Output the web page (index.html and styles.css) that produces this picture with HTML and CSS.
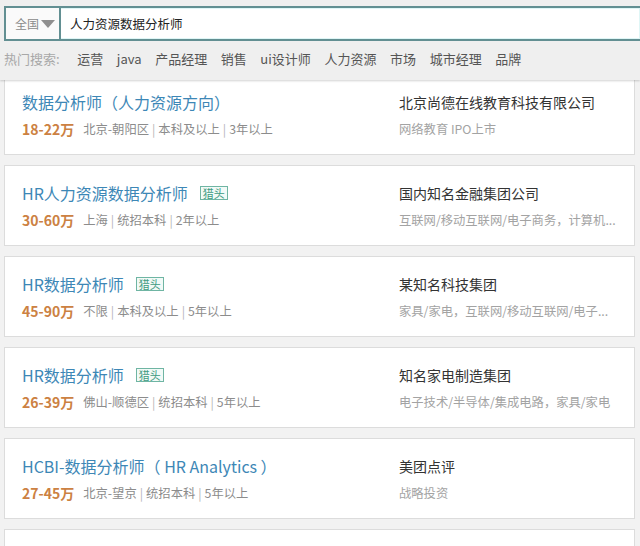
FILE: index.html
```html
<!DOCTYPE html>
<html lang="zh-CN">
<head>
<meta charset="utf-8">
<title>搜索结果</title>
<link rel="stylesheet" href="styles.css">
</head>
<body>
<div class="page">
  <header class="header">
    <div class="search">
      <div class="city">全国<span class="caret"></span></div>
      <div class="query">人力资源数据分析师</div>
    </div>
    <div class="hot">
      <span class="hot-label">热门搜索:</span>
      <span class="hot-item">运营</span>
      <span class="hot-item">java</span>
      <span class="hot-item">产品经理</span>
      <span class="hot-item">销售</span>
      <span class="hot-item">ui设计师</span>
      <span class="hot-item">人力资源</span>
      <span class="hot-item">市场</span>
      <span class="hot-item">城市经理</span>
      <span class="hot-item">品牌</span>
    </div>
  </header>
  <main class="list">
    <div class="card first">
      <div class="left">
        <div class="title">数据分析师（人力资源方向）</div>
        <div class="meta"><span class="salary">18-22万</span><span class="info">北京-朝阳区<i>|</i>本科及以上<i>|</i>3年以上</span></div>
      </div>
      <div class="right">
        <div class="company">北京尚德在线教育科技有限公司</div>
        <div class="industry">网络教育 IPO上市</div>
      </div>
    </div>
    <div class="card">
      <div class="left">
        <div class="title">HR人力资源数据分析师<span class="tag">猎头</span></div>
        <div class="meta"><span class="salary">30-60万</span><span class="info">上海<i>|</i>统招本科<i>|</i>2年以上</span></div>
      </div>
      <div class="right">
        <div class="company">国内知名金融集团公司</div>
        <div class="industry">互联网/移动互联网/电子商务，计算机...</div>
      </div>
    </div>
    <div class="card">
      <div class="left">
        <div class="title">HR数据分析师<span class="tag">猎头</span></div>
        <div class="meta"><span class="salary">45-90万</span><span class="info">不限<i>|</i>本科及以上<i>|</i>5年以上</span></div>
      </div>
      <div class="right">
        <div class="company">某知名科技集团</div>
        <div class="industry">家具/家电，互联网/移动互联网/电子...</div>
      </div>
    </div>
    <div class="card">
      <div class="left">
        <div class="title">HR数据分析师<span class="tag">猎头</span></div>
        <div class="meta"><span class="salary">26-39万</span><span class="info">佛山-顺德区<i>|</i>统招本科<i>|</i>5年以上</span></div>
      </div>
      <div class="right">
        <div class="company">知名家电制造集团</div>
        <div class="industry">电子技术/半导体/集成电路，家具/家电</div>
      </div>
    </div>
    <div class="card">
      <div class="left">
        <div class="title">HCBI-数据分析师（ HR Analytics ）</div>
        <div class="meta"><span class="salary">27-45万</span><span class="info">北京-望京<i>|</i>统招本科<i>|</i>5年以上</span></div>
      </div>
      <div class="right">
        <div class="company">美团点评</div>
        <div class="industry">战略投资</div>
      </div>
    </div>
    <div class="card">
      <div class="left">
        <div class="title">&nbsp;</div>
      </div>
    </div>
  </main>
</div>
</body>
</html>
```

FILE: styles.css
```css
* { box-sizing: border-box; }
html, body { margin: 0; padding: 0; }
body {
  width: 640px;
  height: 546px;
  overflow: hidden;
  background: #f2f2f2;
  font-family: "Noto Sans CJK SC", "Noto Sans", sans-serif;
  color: #333;
}
.page { display: flex; flex-direction: column; height: 546px; }

.header {
  position: relative;
  z-index: 2;
  background: #efefef;
  height: 80px;
  padding: 6px 0 0 4px;
  box-shadow: 0 1px 2px rgba(0,0,0,0.18);
}
.search {
  display: flex;
  height: 35px;
  border: 2px solid #628f92;
  border-right: none;
  background: #fff;
  box-shadow: inset 0 0 0 1px #dff6f6;
}
.city {
  width: 55px;
  display: flex;
  align-items: center;
  padding-left: 9px;
  font-size: 12px;
  color: #8a8a8a;
  border-right: 2px solid #628f92;
  background: #fafafa;
}
.caret {
  display: inline-block;
  margin-left: 2px;
  width: 0; height: 0;
  border-left: 7px solid transparent;
  border-right: 7px solid transparent;
  border-top: 8px solid #8f8f8f;
}
.query {
  display: flex;
  align-items: center;
  padding-left: 9px;
  font-size: 12.5px;
  color: #222;
}
.hot {
  display: flex;
  align-items: center;
  height: 34px;
  gap: 13.6px;
  font-size: 13px;
  color: #555;
}
.hot-label { color: #a8a8a8; margin-right: 4px; }

.list {
  flex: 1;
  overflow: hidden;
  padding: 0 5px 0 4px;
  display: flex;
  flex-direction: column;
  gap: 10px;
}
.card {
  flex: none;
  display: grid;
  grid-template-columns: 377px 1fr;
  height: 81px;
  background: #fff;
  border: 1px solid #dcdcdc;
  padding: 17px 0 0 17px;
}
.card.first { margin-top: -6px; }
.left, .right { display: flex; flex-direction: column; gap: 8px; min-width: 0; }
.title {
  font-size: 16px;
  line-height: 20px;
  color: #3d87b6;
  display: flex;
  align-items: center;
  white-space: nowrap;
}
.tag {
  margin-left: 12px;
  font-size: 11px;
  line-height: 12px;
  padding: 0 2px;
  color: #3f9a82;
  border: 1px solid #6fb5a3;
  background: #f2faf7;
}
.meta {
  display: flex;
  align-items: center;
  height: 18px;
  white-space: nowrap;
}
.salary {
  font-size: 14px;
  font-weight: bold;
  color: #cc8142;
  margin-right: 9px;
}
.info { font-size: 12.3px; color: #8c8c8c; }
.info i { font-style: normal; color: #b5b5b5; margin: 0 3px; }
.company {
  font-size: 14px;
  line-height: 20px;
  color: #333;
  white-space: nowrap;
}
.industry {
  font-size: 12.3px;
  line-height: 18px;
  color: #a3a3a3;
  white-space: nowrap;
  overflow: hidden;
}
```
